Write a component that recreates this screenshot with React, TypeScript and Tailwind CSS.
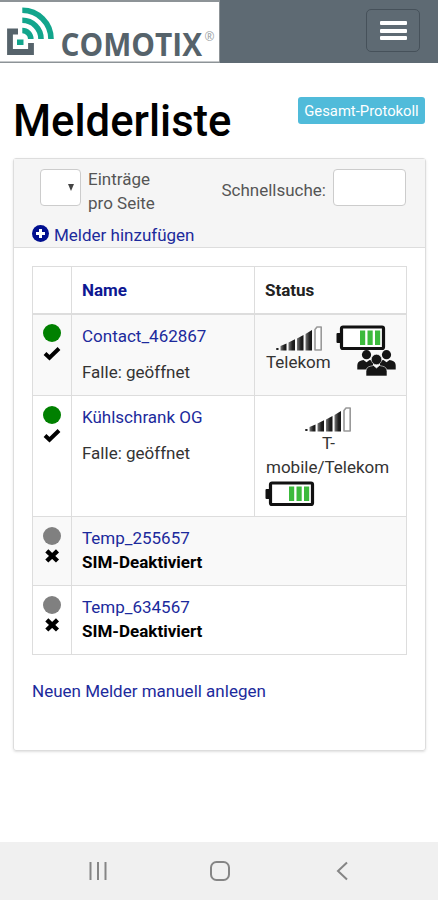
import type { ReactNode } from "react";

type Detector = {
  name: string;
  active: boolean;
  rowClass: string;
  status?: ReactNode;
};

function Logo() {
  return (
    <svg width="220" height="64" viewBox="0 0 220 64" className="block shrink-0 overflow-visible">
      <rect width="220" height="63" fill="#8d9397" />
      <rect y="2" width="219" height="59.5" fill="#fff" />
      <path d="M18 31.5H10V52H31V43" fill="none" stroke="#56636b" strokeWidth="5.8" />
      <rect x="17" y="39.500" width="6.500" height="5.500" fill="#12a58c" />
      <g fill="none" stroke="#12a58c" strokeWidth="5.6">
        <path d="M22.300 30.500A8.500 8.500 0 0 1 30.800 39" />
        <path d="M22.300 20.300A18.700 18.700 0 0 1 41 39" />
        <path d="M22.300 10.300A28.700 28.700 0 0 1 51 39" />
      </g>
      <text
        x="60.5"
        y="55.5"
        fill="#56636b"
        fontFamily="'Open Sans', sans-serif"
        fontSize="32.5"
        fontWeight="700"
        textLength="141.5"
        lengthAdjust="spacingAndGlyphs"
      >
        COMOTIX
      </text>
      <text x="204.5" y="41" fill="#9aa1a5" fontFamily="'Open Sans', sans-serif" fontSize="12">
        ®
      </text>
    </svg>
  );
}

function SignalIcon({ className }: { className?: string }) {
  return (
    <svg width="48" height="27" viewBox="0 0 48 27" className={className}>
      <defs>
        <linearGradient id="bar" x1="0" x2="1">
          <stop offset="0" stopColor="#777" />
          <stop offset="0.6" stopColor="#222" />
          <stop offset="1" stopColor="#161616" />
        </linearGradient>
      </defs>
      <g fill="url(#bar)">
        <path d="M1 23h2.500v2H1z" />
        <path d="M5.500 21l6-2.500v7h-6z" />
        <path d="M13.500 17.500l6.500-3.200v11.200h-6.500z" />
        <path d="M22 13.500l6.500-3.500v15.500h-6.500z" />
        <path d="M30.500 9l6.500-4v20.500h-6.500z" />
      </g>
      <path d="M40 4.500l2-2.500h4.200v23H40z" fill="#fff" stroke="#999" strokeWidth="1.6" strokeLinejoin="round" />
    </svg>
  );
}

function BatteryIcon({ className }: { className?: string }) {
  return (
    <svg width="50" height="26" viewBox="0 0 50 26" className={className}>
      <rect x="0.500" y="8" width="5" height="10" rx="1" fill="#111" />
      <rect x="5.500" y="2" width="42" height="21.500" rx="1.500" fill="#fff" stroke="#111" strokeWidth="3.2" />
      <g fill="#3cba3c">
        <rect x="24" y="5.500" width="5.200" height="14.500" />
        <rect x="31.500" y="5.500" width="5.200" height="14.500" />
        <rect x="39" y="5.500" width="5.200" height="14.500" />
      </g>
    </svg>
  );
}

function GroupIcon({ className }: { className?: string }) {
  return (
    <svg width="39" height="27" viewBox="0 0 39 27" fill="#151515" className={className}>
      <circle cx="9.500" cy="4.700" r="4.600" />
      <circle cx="29.500" cy="4.700" r="4.600" />
      <path d="M0.300 19.500v-4q0-4 4-5l2.200-.5 3 2.300 3-2.300 3.500.7v8.800z" />
      <path d="M38.700 19.500v-4q0-4-4-5l-2.200-.5-3 2.300-3-2.300-3.500.7v8.800z" />
      <g stroke="#f9f9f9" strokeWidth="0.6">
        <path d="M9 26v-4.500q0-4.500 4.500-5.300l3-.7 3 2.500 3-2.500 3 .7q4.500.8 4.500 5.300V26z" />
        <circle cx="19.500" cy="9.500" r="5.200" />
      </g>
    </svg>
  );
}

const detectors: Detector[] = [
  {
    name: "Contact_462867",
    active: true,
    rowClass: "h-[82px] bg-[#f9f9f9]",
    status: (
      <div className="flex justify-between">
        <div className="flex w-16 flex-col">
          <SignalIcon className="ml-2.5" />
          <span className="-mt-0.5 ml-px leading-6">Telekom</span>
        </div>
        <div className="flex flex-col items-end">
          <BatteryIcon className="mr-2.5" />
          <GroupIcon className="-mt-px" />
        </div>
      </div>
    ),
  },
  {
    name: "Kühlschrank OG",
    active: true,
    rowClass: "h-[121px]",
    status: (
      <>
        <div className="flex flex-col items-center leading-6">
          <SignalIcon className="-ml-1.5" />
          <span className="-mt-0.5 -ml-1">T-</span>
        </div>
        <div className="ml-px leading-6">mobile/Telekom</div>
        <BatteryIcon className="mt-0.5" />
      </>
    ),
  },
  { name: "Temp_255657", active: false, rowClass: "h-[69px] bg-[#f9f9f9]" },
  { name: "Temp_634567", active: false, rowClass: "h-[69px]" },
];

function StateIcons({ active }: { active: boolean }) {
  return (
    <div className="flex flex-col items-center gap-0.5">
      <span className={`size-[18px] rounded-full ${active ? "bg-[#008000]" : "bg-[#808080]"}`} />
      <svg width="18" height="18" viewBox="0 0 18 18" fill="none" stroke="#000">
        {active ? (
          <path d="M2 9.500l4.500 4.300L16 4.500" strokeWidth="4" />
        ) : (
          <path d="M3.800 3.800l10.700 10.200M14.500 3.800L3.800 14" strokeWidth="4.4" />
        )}
      </svg>
    </div>
  );
}

export default function App() {
  return (
    <div className="flex h-[900px] w-[438px] flex-col bg-white font-[Roboto,sans-serif] text-[17px] text-[#333]">
      <header className="flex h-[63px] items-start justify-between bg-[#5e6a73] pr-[18px]">
        <Logo />
        <button className="mt-[9px] flex h-[43px] w-[54px] flex-col items-center justify-center gap-[3.500px] rounded-[5px] border-[1.500px] border-[#46515a]">
          <span className="h-1 w-[27px] rounded-[1px] bg-white" />
          <span className="h-1 w-[27px] rounded-[1px] bg-white" />
          <span className="h-1 w-[27px] rounded-[1px] bg-white" />
        </button>
      </header>

      <main className="flex-1 px-[13px]">
        <div className="flex h-[95px] items-start justify-between">
          <h1 className="pt-[33px] text-[43.600px] leading-[52px] font-medium text-black">Melderliste</h1>
          <button className="mt-[34px] h-[27px] w-[127px] rounded-[3px] bg-[#50bbda] pt-px text-[14.800px] whitespace-nowrap text-white">
            Gesamt-Protokoll
          </button>
        </div>

        <section className="h-[593px] w-[413px] rounded-[3px] border border-[#dddddd] shadow-sm">
          <div className="h-[89px] border-b border-[#dddddd] bg-[#f5f5f5] pr-[19px] pl-[18px]">
            <div className="flex h-16 items-start pt-[10px] pl-2">
              <div className="flex h-[37px] w-[41px] items-center justify-end rounded-[4px] border border-[#cccccc] bg-white pr-1.5">
                <span className="border-x-[3.500px] border-t-[7px] border-x-transparent border-t-[#444]" />
              </div>
              <div className="-mt-0.5 ml-[7px] w-20 leading-6 text-[#555]">
                Einträge
                <br />
                pro Seite
              </div>
              <label className="ml-auto flex items-center gap-[7px] text-[#555]">
                <span className="pt-1.5">Schnellsuche:</span>
                <input className="h-[37px] w-[73px] rounded-[4px] border border-[#cccccc] bg-white" />
              </label>
            </div>
            <a className="flex items-center gap-[5px] leading-6 text-[#1c2a9c]">
              <svg width="17" height="17" viewBox="0 0 17 17" className="-mt-[3px]">
                <circle cx="8.5" cy="8.5" r="8.5" fill="#000f8f" />
                <path d="M8.500 4v9M4 8.500h9" stroke="#fff" strokeWidth="3" />
              </svg>
              Melder hinzufügen
            </a>
          </div>

          <div className="px-[18px] pt-[18px]">
            <table className="w-[374px] table-fixed border-collapse text-left [&_td]:border [&_td]:border-[#dddddd] [&_th]:border [&_th]:border-[#dddddd]">
              <colgroup>
                <col className="w-[39px]" />
                <col className="w-[183px]" />
                <col className="w-[152px]" />
              </colgroup>
              <thead>
                <tr className="h-[47px]">
                  <th className="border-b-2!" />
                  <th className="border-b-2! px-[10px] pt-0.5 font-bold text-[#0d1792]">Name</th>
                  <th className="border-b-2! px-[10px] pt-0.5 font-bold text-[#222]">Status</th>
                </tr>
              </thead>
              <tbody>
                {detectors.map((d) => (
                  <tr key={d.name} className={d.rowClass}>
                    <td className="pt-[9.500px] align-top">
                      <StateIcons active={d.active} />
                    </td>
                    <td colSpan={d.status ? 1 : 2} className="px-[10px] pt-[9px] align-top leading-6">
                      <a className="block text-[#1c2a9c]">{d.name}</a>
                      {d.active ? (
                        <p className="mt-3">Falle: geöffnet</p>
                      ) : (
                        <p className="font-bold text-black">SIM-Deaktiviert</p>
                      )}
                    </td>
                    {d.status && <td className="px-[10px] pt-[10px] align-top">{d.status}</td>}
                  </tr>
                ))}
              </tbody>
            </table>
            <a className="mt-6 block leading-6 text-[#1c2a9c]">Neuen Melder manuell anlegen</a>
          </div>
        </section>
      </main>

      <nav className="flex h-[58px] shrink-0 items-center justify-between bg-[#f0f0f0] px-[87px] text-[#858585]">
        <svg width="22" height="22" viewBox="0 0 22 22" stroke="currentColor" strokeWidth="2">
          <path d="M3.500 2v18M11 2v18M18.500 2v18" />
        </svg>
        <svg width="22" height="22" viewBox="0 0 22 22" fill="none" stroke="currentColor" strokeWidth="2">
          <rect x="3" y="2" width="18" height="18" rx="5.500" />
        </svg>
        <svg width="22" height="22" viewBox="0 0 22 22" fill="none" stroke="currentColor" strokeWidth="2">
          <path d="M18 2.500L9 11l9 8.500" />
        </svg>
      </nav>
    </div>
  );
}
